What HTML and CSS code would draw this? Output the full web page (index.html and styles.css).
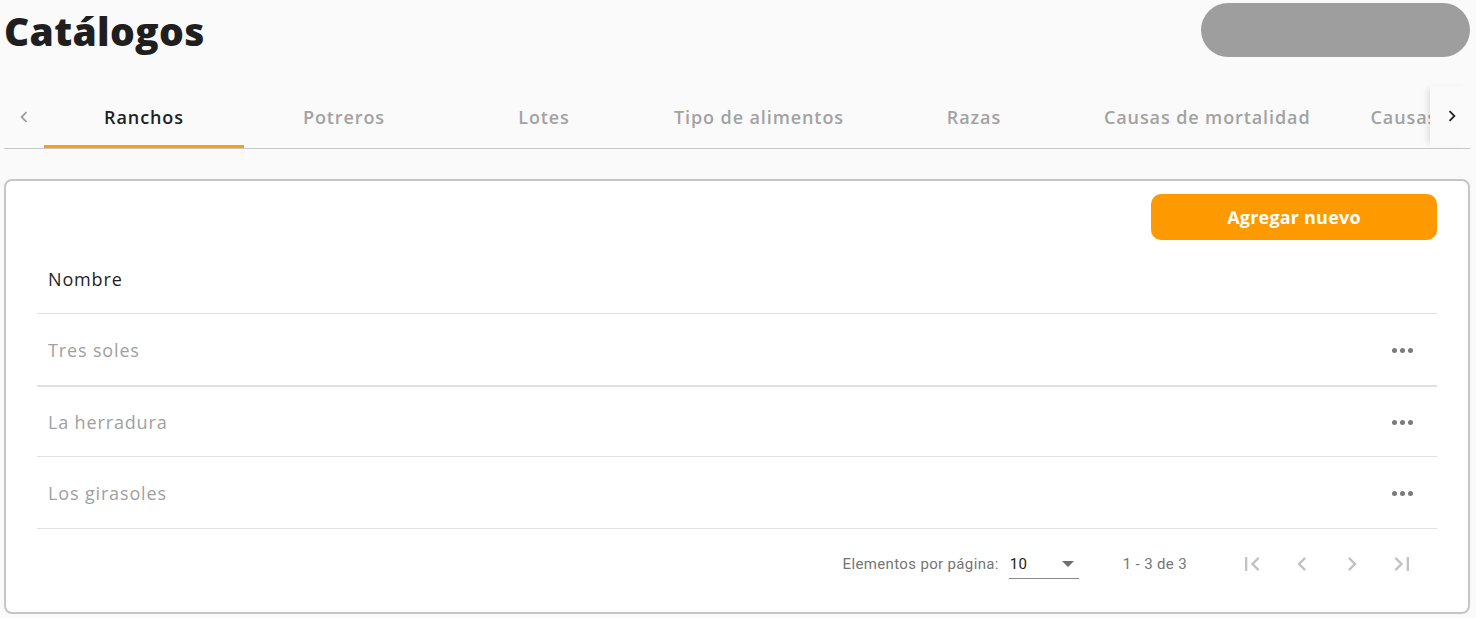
FILE: index.html
```html
<!DOCTYPE html>
<html lang="es">
<head>
<meta charset="utf-8">
<title>Catálogos</title>
<link rel="stylesheet" href="styles.css">
</head>
<body>
<div class="page">
  <header class="top">
    <h1 class="title">Catálogos</h1>
    <div class="pill"></div>
  </header>

  <nav class="tab-header">
    <button class="tab-nav tab-nav-left" aria-label="anterior">
      <svg viewBox="0 0 24 24" width="22" height="22"><path d="M15.41 7.41L14 6l-6 6 6 6 1.41-1.41L10.83 12z" fill="#9e9e9e"/></svg>
    </button>
    <div class="tab-list">
      <div class="tab active">Ranchos</div>
      <div class="tab">Potreros</div>
      <div class="tab">Lotes</div>
      <div class="tab">Tipo de alimentos</div>
      <div class="tab">Razas</div>
      <div class="tab">Causas de mortalidad</div>
      <div class="tab">Causas de descarte</div>
    </div>
    <button class="tab-nav tab-nav-right" aria-label="siguiente">
      <svg viewBox="0 0 24 24" width="22" height="22"><path d="M10 6L8.59 7.41 13.17 12l-4.58 4.59L10 18l6-6z" fill="#222"/></svg>
    </button>
  </nav>

  <section class="card">
    <div class="actions">
      <button class="btn-add">Agregar nuevo</button>
    </div>
    <div class="table">
      <div class="row head"><span class="cell">Nombre</span></div>
      <div class="row"><span class="cell">Tres soles</span><span class="dots"><i></i><i></i><i></i></span></div>
      <div class="row thick"><span class="cell">La herradura</span><span class="dots"><i></i><i></i><i></i></span></div>
      <div class="row"><span class="cell">Los girasoles</span><span class="dots"><i></i><i></i><i></i></span></div>
    </div>
    <div class="paginator">
      <span class="pg-label">Elementos por página:</span>
      <div class="pg-select"><span>10</span><span class="caret"></span></div>
      <span class="pg-range">1 - 3 de 3</span>
      <div class="pg-btns">
        <span class="pg-btn"><svg viewBox="0 0 24 24" width="28" height="28"><path d="M18.41 16.59L13.82 12l4.59-4.59L17 6l-6 6 6 6zM6 6h2v12H6z" fill="#c2c2c2"/></svg></span>
        <span class="pg-btn"><svg viewBox="0 0 24 24" width="28" height="28"><path d="M15.41 7.41L14 6l-6 6 6 6 1.41-1.41L10.83 12z" fill="#c2c2c2"/></svg></span>
        <span class="pg-btn"><svg viewBox="0 0 24 24" width="28" height="28"><path d="M10 6L8.59 7.41 13.17 12l-4.58 4.59L10 18l6-6z" fill="#c2c2c2"/></svg></span>
        <span class="pg-btn"><svg viewBox="0 0 24 24" width="28" height="28"><path d="M5.59 7.41L10.18 12l-4.59 4.59L7 18l6-6-6-6zM16 6h2v12h-2z" fill="#c2c2c2"/></svg></span>
      </div>
    </div>
  </section>
</div>
</body>
</html>
```

FILE: styles.css
```css
* { box-sizing: border-box; }
html, body { margin: 0; padding: 0; }
body {
  background: #fafafa;
  font-family: "Open Sans", "Liberation Sans", sans-serif;
  color: #212121;
}
.page { padding: 0 6px 0 4px; width: 1476px; height: 618px; overflow: hidden; }

.top {
  display: flex;
  justify-content: space-between;
  align-items: flex-start;
  height: 86px;
}
.title {
  margin: 0;
  padding-left: 0;
  font-size: 39px;
  line-height: 62px;
  font-weight: 800;
  letter-spacing: 0.3px;
  color: #1f1f1f;
}
.pill {
  margin-top: 3px;
  width: 269px;
  height: 54px;
  border-radius: 27px;
  background: #9e9e9e;
}

.tab-header {
  display: flex;
  height: 63px;
  border-bottom: 1px solid #c8c8c8;
}
.tab-nav {
  width: 40px;
  flex: none;
  border: 0;
  background: #fafafa;
  padding: 0;
  display: flex;
  align-items: center;
  justify-content: center;
  padding-bottom: 1px;
}
.tab-nav-left { justify-content: flex-start; padding-left: 9px; }
.tab-nav-right {
  box-shadow: -5px 0 6px -3px rgba(0,0,0,0.12);
  position: relative;
  z-index: 1;
  height: 60px;
  padding-left: 4px;
}
.tab-list {
  flex: 1;
  display: flex;
  overflow: hidden;
}
.tab {
  flex: none;
  min-width: 200px;
  padding: 0 30px;
  height: 62px;
  display: flex;
  align-items: center;
  justify-content: center;
  font-size: 18px;
  font-weight: 600;
  letter-spacing: 0.9px;
  color: #a2a2a2;
  white-space: nowrap;
  border-bottom: 2px solid transparent;
  padding-top: 2px;
}
.tab.active { color: #212121; border-bottom: 3px solid #fb9e16; padding-top: 3px; }

.card {
  margin-top: 30px;
  height: 435px;
  background: #fff;
  border: 2px solid #c6c6c6;
  border-radius: 8px;
  padding: 13px 31px 0 31px;
}
.actions { display: flex; justify-content: flex-end; }
.btn-add {
  width: 286px;
  height: 46px;
  border: 0;
  border-radius: 10px;
  background: #ff9900;
  color: #fff;
  font-family: inherit;
  font-size: 18px;
  font-weight: 700;
  letter-spacing: 0.2px;
}

.table { display: flex; flex-direction: column; }
.row {
  display: flex;
  align-items: center;
  justify-content: space-between;
  height: 72px;
  border-bottom: 1px solid #e0e0e0;
  padding: 0 24px 0 11px;
}
.row.head { height: 74px; padding-top: 4px; }
.row.thick { border-top: 1px solid #e0e0e0; height: 71px; }
.cell { font-size: 18px; color: #a0a0a0; letter-spacing: 0.85px; }
.head .cell { color: #1f1f1f; }
.dots { display: flex; gap: 2.5px; margin-top: 2px; }
.dots i { display: block; width: 5.5px; height: 5.5px; border-radius: 50%; background: #7a7a7a; }

.paginator {
  display: flex;
  align-items: center;
  justify-content: flex-end;
  height: 70px;
  padding-right: 10px;
  font-family: "Roboto", "Liberation Sans", sans-serif;
  font-size: 15px;
  letter-spacing: 0.35px;
  color: #757575;
}
.pg-label { margin-right: 10px; }
.pg-select {
  width: 70px;
  height: 30px;
  display: flex;
  align-items: center;
  justify-content: space-between;
  border-bottom: 1px solid #8a8a8a;
  color: #212121;
  padding: 0 5px 0 1px;
}
.caret {
  width: 0; height: 0;
  border-left: 6px solid transparent;
  border-right: 6px solid transparent;
  border-top: 6px solid #6e6e6e;
}
.pg-range { margin-left: 44px; margin-right: 40px; }
.pg-btns { display: flex; }
.pg-btn { width: 50px; height: 40px; display: flex; align-items: center; justify-content: center; }
```
